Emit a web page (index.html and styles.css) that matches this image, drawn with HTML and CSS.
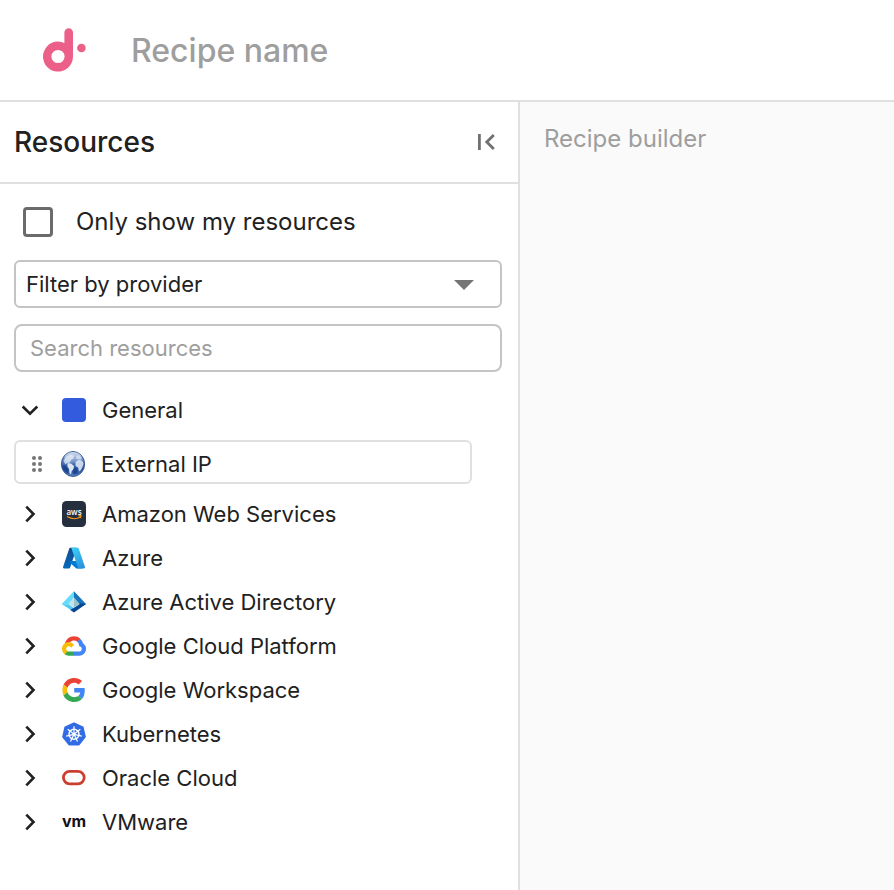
FILE: index.html
```html
<!DOCTYPE html>
<html lang="en">
<head>
<meta charset="utf-8">
<meta name="viewport" content="width=device-width, initial-scale=1">
<title>Recipe builder</title>
<link rel="stylesheet" href="styles.css">
</head>
<body>
<header class="topbar">
  <svg class="brand" viewBox="0 0 44 44" role="img" aria-label="Home">
    <path fill="#ec5f89" fill-rule="evenodd" d="M21.4 4.500a4.300 4.300 0 0 1 8.600 0V28.500A15 15 0 1 1 21.400 15ZM15 21.900a6.600 6.600 0 1 0 0 13.200a6.600 6.600 0 1 0 0-13.200Z"/>
    <circle cx="38.400" cy="20" r="4.300" fill="#ec5f89"/>
  </svg>
  <input class="recipe-name" type="text" placeholder="Recipe name" aria-label="Recipe name">
</header>
<div class="workspace">
  <aside class="sidebar">
    <div class="sidebar-head">
      <h2 class="sidebar-title">Resources</h2>
      <button class="collapse" type="button" aria-label="Collapse panel">
        <svg viewBox="0 0 20 20" width="20" height="20"><path fill="none" stroke="#707070" stroke-width="2.8" d="M3.400 2v16M17.800 3L10.800 10l7 7"/></svg>
      </button>
    </div>
    <div class="sidebar-body">
      <label class="own-only"><input class="checkbox" type="checkbox"><span>Only show my resources</span></label>
      <div class="select-wrap">
        <select class="field provider" aria-label="Filter by provider"><option>Filter by provider</option></select>
        <svg class="caret" viewBox="0 0 20 10" width="20" height="10"><path fill="#757575" d="M0 0h20L10 10z"/></svg>
      </div>
      <input class="field search" type="text" placeholder="Search resources" aria-label="Search resources">
      <ul class="tree">
        <li>
          <button class="row" type="button" aria-expanded="true">
            <svg class="chevron" viewBox="0 0 20 20"><path d="M2.700 6.500L10 13.700l7.300-7.200"/></svg>
            <svg class="icon" viewBox="0 0 24 24"><rect width="24" height="24" rx="4" fill="#325bdd"/></svg>
            <span>General</span>
          </button>
          <div class="resource" draggable="true">
            <svg class="grip" viewBox="0 0 12 18"><g fill="#757575"><circle cx="3" cy="3" r="2"/><circle cx="9" cy="3" r="2"/><circle cx="3" cy="9" r="2"/><circle cx="9" cy="9" r="2"/><circle cx="3" cy="15" r="2"/><circle cx="9" cy="15" r="2"/></g></svg>
            <svg class="globe" viewBox="0 0 24 26">
              <defs>
                <linearGradient id="sea" x2="0" y2="1"><stop offset="0" stop-color="#9db6dc"/><stop offset=".4" stop-color="#587fbe"/><stop offset=".7" stop-color="#204b98"/><stop offset="1" stop-color="#5d86c4"/></linearGradient>
                <linearGradient id="shine" x2="0" y2="1"><stop offset="0" stop-color="#fff" stop-opacity=".8"/><stop offset="1" stop-color="#fff" stop-opacity=".15"/></linearGradient>
              </defs>
              <ellipse cx="12" cy="13" rx="11.600" ry="12.500" fill="url(#sea)" stroke="#2f4f88" stroke-width=".9"/>
              <path fill="#c3d2e8" d="M2.500 10l3-4.500 4-2 3.500 1-.5 3-2.500 1.500-1 2.500-3 .5-1.500 1.500z"/>
              <path fill="#dbe4f1" d="M6.500 12l3.500.5 3 2.500-.5 3-2 2.500-.5 3-1.500-1.500-.5-4-1.500-2.500z"/>
              <path fill="#cbd8eb" d="M14.500 11l3-2 3.500.5 1.500 3-1 3.500-1.500 3-2 1.500-1-4-2.500-1.500z"/>
              <path fill="#b5c8e3" d="M15 5.500l3-1.500 3 4-2.500.5-3-.5z"/>
              <path fill="#173f8c" d="M1.500 14l3 .5 2.500 5 .5 3.500C4 21 1.800 18 1.500 14zM13.500 17.500l2 1 1.500 4-4.500 1-1-2z" opacity=".75"/>
              <ellipse cx="12" cy="6.800" rx="8.800" ry="5.700" fill="url(#shine)" opacity=".65"/>
            </svg>
            <span>External IP</span>
          </div>
        </li>
        <li>
          <button class="row" type="button" aria-expanded="false">
            <svg class="chevron" viewBox="0 0 20 20"><path d="M6.300 2.700l7.200 7.300-7.200 7.300"/></svg>
            <svg class="icon tall" viewBox="0 0 24 26"><rect width="24" height="26" rx="4.500" fill="#252f3e"/><text x="12" y="14" text-anchor="middle" class="aws-mark">aws</text><path fill="none" stroke="#f79a1c" stroke-width="1.100" d="M5 15.500q7 4 13.200.8M16.500 14.900l2.500-.2-.5 2.400"/></svg>
            <span>Amazon Web Services</span>
          </button>
        </li>
        <li>
          <button class="row" type="button" aria-expanded="false">
            <svg class="chevron" viewBox="0 0 20 20"><path d="M6.300 2.700l7.200 7.300-7.200 7.300"/></svg>
            <svg class="icon" viewBox="0 0 96 96">
              <defs>
                <linearGradient id="azL" x1=".6" y1="0" x2=".3" y2="1"><stop offset="0" stop-color="#114a8b"/><stop offset="1" stop-color="#0669bc"/></linearGradient>
                <linearGradient id="azR" x1=".3" y1="0" x2=".7" y2="1"><stop offset="0" stop-color="#3ccbf4"/><stop offset="1" stop-color="#2892df"/></linearGradient>
              </defs>
              <path fill="url(#azL)" d="M33.300 6.500h26.100L32.300 86.800a4.200 4.200 0 0 1-4 2.800H8.200a4.200 4.200 0 0 1-4-5.500L29.400 9.400a4.200 4.200 0 0 1 3.900-2.900z"/>
              <path fill="#0078d4" d="M71.200 60.300H29.900a1.900 1.900 0 0 0-1.300 3.300l26.500 24.800a4.200 4.200 0 0 0 2.900 1.100h23.400z"/>
              <path fill="url(#azR)" d="M66.600 9.400a4.200 4.200 0 0 0-4-2.900H33.700a4.200 4.200 0 0 1 4 2.900l25.200 74.700a4.200 4.200 0 0 1-4 5.500h29a4.200 4.200 0 0 0 4-5.500z"/>
            </svg>
            <span>Azure</span>
          </button>
        </li>
        <li>
          <button class="row" type="button" aria-expanded="false">
            <svg class="chevron" viewBox="0 0 20 20"><path d="M6.300 2.700l7.200 7.300-7.200 7.300"/></svg>
            <svg class="icon" viewBox="0 0 24 24">
              <path fill="#66dbfa" d="M12 1.200L0 14l3.600 2.400L12 11z"/>
              <path fill="#1673bd" d="M12 1.200L24 14l-3.500 2.200L12 11z"/>
              <path fill="#50c8f0" d="M0 14l5.800-.5 6.200 4.700-3.200 1.900z"/>
              <path fill="#074793" d="M24 14l-12 8.600-3.800-2.700 7.800-4.700 2-2z"/>
              <path fill="#66dbfa" d="M12 1.200v6.600L5.500 15l-3.500.4L0 14z"/>
              <path fill="#c0e5ee" d="M12 7.200v10.200L6.200 14z"/>
              <path fill="#9cc2c7" d="M12 7.200l5.800 6.800-5.800 3.400z"/>
            </svg>
            <span>Azure Active Directory</span>
          </button>
        </li>
        <li>
          <button class="row" type="button" aria-expanded="false">
            <svg class="chevron" viewBox="0 0 20 20"><path d="M6.300 2.700l7.200 7.300-7.200 7.300"/></svg>
            <svg class="icon" viewBox="0 -25 256 256">
              <path fill="#ea4335" d="M170.252 56.819l22.253-22.253 1.483-9.370C153.437-11.677 88.976-7.496 52.420 33.920 42.267 45.423 34.734 59.764 30.717 74.573l7.970-1.123 44.505-7.340 3.436-3.513c19.797-21.742 53.270-24.667 76.128-6.168z"/>
              <path fill="#4285f4" d="M224.205 73.918a100.249 100.249 0 0 0-30.217-48.722l-31.232 31.232a55.515 55.515 0 0 1 20.379 44.037v5.544c15.350 0 27.797 12.445 27.797 27.796 0 15.352-12.446 27.573-27.797 27.573h-55.671l-5.466 5.934v33.340l5.466 5.231h55.670c39.930.311 72.553-31.494 72.864-71.424a72.303 72.303 0 0 0-31.793-60.541"/>
              <path fill="#34a853" d="M71.870 205.796h55.593V161.290H71.870a27.275 27.275 0 0 1-11.467-2.498l-7.884 2.420-22.409 22.252-1.952 7.573c12.567 9.489 27.900 14.825 43.712 14.759"/>
              <path fill="#fbbc05" d="M71.870 61.425C31.940 61.664-.237 94.228.001 134.158a72.301 72.301 0 0 0 28.222 56.880l32.248-32.246c-13.990-6.322-20.208-22.786-13.887-36.776 6.320-13.990 22.786-20.208 36.775-13.888a27.796 27.796 0 0 1 13.887 13.888l32.248-32.248A72.224 72.224 0 0 0 71.870 61.425"/>
            </svg>
            <span>Google Cloud Platform</span>
          </button>
        </li>
        <li>
          <button class="row" type="button" aria-expanded="false">
            <svg class="chevron" viewBox="0 0 20 20"><path d="M6.300 2.700l7.200 7.300-7.200 7.300"/></svg>
            <svg class="icon" viewBox="0 0 48 48">
              <path fill="#ea4335" d="M24.500 9.500c3.500 0 6.200 1.200 8.700 3.600l6.900-6.900C35.900 2.400 30.500 0 24.500 0 15.100 0 7 5.400 3.100 13.200l8 6.200C12.900 13.700 18.200 9.500 24.500 9.500z"/>
              <path fill="#4285f4" d="M45.500 24.600c0-1.600-.1-3.100-.4-4.600H24.500v9h11.900c-.6 3-1.800 5.500-4.200 7.200l7.700 6c4-4.200 5.600-10.400 5.600-17.600z"/>
              <path fill="#fbbc05" d="M11 28.600c-.5-1.500-.8-3-.8-4.600s.3-3.100.8-4.600l-8-6.200C1.400 16.500 1 20.100 1 24s.4 7.500 2 10.800z"/>
              <path fill="#34a853" d="M24.500 48c6.500 0 11.400-2.100 15.400-5.800l-7.700-6c-2.200 1.500-4.400 2.300-7.700 2.300-6.300 0-11.600-4.200-13.500-9.900l-8 6.200C7 42.600 15.100 48 24.500 48z"/>
            </svg>
            <span>Google Workspace</span>
          </button>
        </li>
        <li>
          <button class="row" type="button" aria-expanded="false">
            <svg class="chevron" viewBox="0 0 20 20"><path d="M6.300 2.700l7.200 7.300-7.200 7.300"/></svg>
            <svg class="icon" viewBox="0 0 24 24">
              <path fill="#326ce5" stroke="#326ce5" stroke-width="2" stroke-linejoin="round" d="M12 1.300l8.700 4.200 2.100 9.300-6 7.700H7.200l-6-7.700 2.100-9.300z"/>
              <g fill="none" stroke="#fff"><circle cx="12" cy="12.300" r="5" stroke-width="1.500"/><path stroke-width="1.200" d="M12 12.300V4.300M12 12.300l6.300-5M12 12.300l7.800 1.800M12 12.300l3.500 7.200M12 12.300l-3.500 7.200M12 12.300l-7.800 1.800M12 12.300L5.700 7.300"/></g>
              <circle cx="12" cy="12.300" r="1.300" fill="#fff"/>
            </svg>
            <span>Kubernetes</span>
          </button>
        </li>
        <li>
          <button class="row" type="button" aria-expanded="false">
            <svg class="chevron" viewBox="0 0 20 20"><path d="M6.300 2.700l7.200 7.300-7.200 7.300"/></svg>
            <svg class="icon" viewBox="0 0 24 24"><rect x="1.400" y="5.400" width="20.800" height="12.400" rx="6.200" fill="none" stroke="#cb3f30" stroke-width="2.800"/></svg>
            <span>Oracle Cloud</span>
          </button>
        </li>
        <li>
          <button class="row" type="button" aria-expanded="false">
            <svg class="chevron" viewBox="0 0 20 20"><path d="M6.300 2.700l7.200 7.300-7.200 7.300"/></svg>
            <svg class="icon" viewBox="0 0 24 24"><text x="12" y="17" text-anchor="middle" class="vm-mark">vm</text></svg>
            <span>VMware</span>
          </button>
        </li>
      </ul>
    </div>
  </aside>
  <main class="builder"><p class="builder-hint">Recipe builder</p></main>
</div>
</body>
</html>
```
FILE: styles.css
```css
*, *::before, *::after { box-sizing: border-box; }

body {
  margin: 0;
  min-height: 100vh;
  display: flex;
  flex-direction: column;
  background: #fff;
  color: #212121;
  font-family: Inter, "Liberation Sans", sans-serif;
  font-size: 22px;
  line-height: 28px;
}

button, input, select { font: inherit; color: inherit; }
svg { flex: none; display: block; }

.topbar {
  display: flex;
  align-items: center;
  gap: 44px;
  padding: 25px 43px;
  border-bottom: 2px solid #e0e0e0;
}
.brand { width: 44px; height: 44px; }
.recipe-name {
  flex: 1;
  min-width: 0;
  height: 50px;
  padding: 0;
  border: 0;
  outline: 0;
  background: none;
  font-size: 32px;
  font-weight: 500;
}
::placeholder { color: #9e9e9e; opacity: 1; }

.workspace { flex: 1; display: flex; }
.sidebar {
  flex: 0 1 520px;
  border-right: 2px solid #e0e0e0;
}
.sidebar-head {
  display: flex;
  align-items: center;
  justify-content: space-between;
  padding: 20px 22px 20px 14px;
  border-bottom: 2px solid #e0e0e0;
}
.sidebar-title {
  margin: 0;
  font-size: 28px;
  font-weight: 500;
  line-height: 40px;
}
.collapse {
  display: flex;
  padding: 0;
  border: 0;
  background: none;
}

.sidebar-body {
  display: flex;
  flex-direction: column;
  gap: 16px;
  padding: 16px 16px 16px 14px;
}
.own-only {
  display: flex;
  align-items: center;
  gap: 23px;
  height: 44px;
  padding-left: 9px;
  font-size: 24px;
}
.checkbox {
  appearance: none;
  width: 30px;
  height: 30px;
  margin: 0;
  border: 3px solid #6b6b6b;
  border-radius: 4px;
}
.checkbox:checked { background: #325bdd; }

.field {
  width: 100%;
  height: 48px;
  border: 2px solid #c4c4c4;
  border-radius: 6px;
  background: #fff;
}
.search { padding: 0 14px; border-radius: 8px; }
.select-wrap { display: grid; align-items: center; }
.provider {
  grid-area: 1 / 1;
  appearance: none;
  padding: 0 56px 0 10px;
}
.caret {
  grid-area: 1 / 1;
  justify-self: end;
  margin: 2px 28px 0 0;
  pointer-events: none;
}

.tree { margin: 0; padding: 0; list-style: none; }
.row {
  display: flex;
  align-items: center;
  width: 100%;
  height: 44px;
  padding: 0 6px;
  border: 0;
  background: none;
  text-align: left;
}
.chevron {
  width: 20px;
  height: 20px;
  margin-right: 22px;
  fill: none;
  stroke: #212121;
  stroke-width: 2.6;
}
.icon { width: 24px; height: 24px; margin-right: 16px; }
.tall { height: 26px; }
.resource {
  display: flex;
  align-items: center;
  height: 44px;
  margin: 8px 30px 8px 0;
  padding: 4px 15px 0;
  border: 2px solid #e0e0e0;
  border-radius: 6px;
}
.grip { width: 12px; height: 18px; margin-right: 18px; }
.globe { width: 24px; height: 26px; margin-right: 16px; }

.aws-mark { font: 600 8px "Open Sans", sans-serif; fill: #fff; }
.vm-mark { font: 700 16px Inter, sans-serif; fill: #111; }

.builder { flex: 1; background: #fafafa; padding: 22px 24px; }
.builder-hint { margin: 0; color: #9e9e9e; font-size: 24px; line-height: 30px; }
```
